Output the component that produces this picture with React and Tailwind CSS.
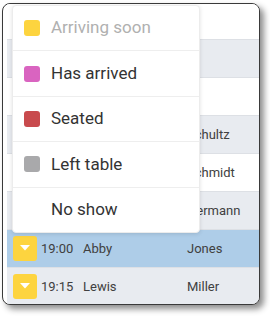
const rows = [
  { time: '', first: '', last: '' },
  { time: '', first: '', last: '' },
  { time: '', first: '', last: '' },
  { time: '', first: '', last: 'Schultz' },
  { time: '', first: '', last: 'Schmidt' },
  { time: '', first: '', last: 'Hermann' },
  { time: '19:00', first: 'Abby', last: 'Jones', selected: true },
  { time: '19:15', first: 'Lewis', last: 'Miller' },
];

const options = [
  { label: 'Arriving soon', swatch: 'bg-[#fdd43f]', disabled: true },
  { label: 'Has arrived', swatch: 'bg-[#d964c0]' },
  { label: 'Seated', swatch: 'bg-[#c84a4d]' },
  { label: 'Left table', swatch: 'bg-[#a9a9ab]' },
  { label: 'No show', swatch: null },
];

function Caret() {
  return (
    <svg width="10" height="6" viewBox="0 0 10 6" className="mt-[-2px]">
      <path d="M0 0 L10 0 L5 5.5 Z" fill="#fff" />
    </svg>
  );
}

export default function App() {
  return (
    <div className="w-[270px] h-[316px] bg-white pt-[3px] pl-[2px] font-['Roboto',sans-serif]">
      <div className="relative w-[258px] h-[302px] border border-[#3a3a3a] rounded-[8px] bg-white overflow-hidden shadow-[4px_4px_6px_rgba(0,0,0,0.45)]">
        {/* Reservation table */}
        <div className="h-full pl-[4px] overflow-hidden">
          <div className="mt-[-2px]">
            {rows.map((r, i) => (
              <div
                key={i}
                className={`h-[38px] flex items-center border-b border-[#dde0e5] text-[13px] text-[#404040] ${
                  r.selected ? 'bg-[#aecde8]' : i % 2 ? 'bg-[#e8ebf0]' : 'bg-white'
                }`}
              >
                <div className="ml-[6px] w-[24px] h-[25px] rounded-[3px] bg-[#fdd43f] flex items-center justify-center">
                  <Caret />
                </div>
                <span className="ml-[4px] w-[42px]">{r.time}</span>
                <span className="w-[104px]">{r.first}</span>
                <span>{r.last}</span>
              </div>
            ))}
          </div>
        </div>

        {/* Status dropdown */}
        <div className="absolute left-[9px] top-[1px] w-[188px] h-[228px] bg-white rounded-[4px] border border-[#ececec] shadow-[0_1px_4px_rgba(0,0,0,0.12)] flex flex-col">
          {options.map((o, i) => (
            <div
              key={o.label}
              className={`flex-1 flex items-center pl-[11px] ${i < options.length - 1 ? 'border-b border-[#eeeeee]' : ''}`}
            >
              <span className={`w-[16px] h-[16px] rounded-[3px] ${o.swatch || ''}`} />
              <span className={`ml-[11px] text-[17px] ${o.disabled ? 'text-[#b0b0b0]' : 'text-[#333333]'}`}>
                {o.label}
              </span>
            </div>
          ))}
        </div>
      </div>
    </div>
  );
}
